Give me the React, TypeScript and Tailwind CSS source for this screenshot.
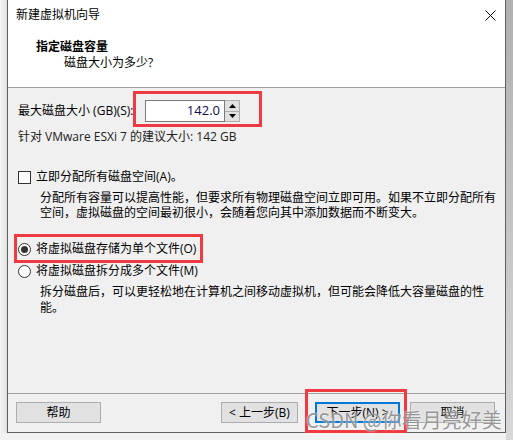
import React from "react";

const FONT = '"Open Sans", "Noto Sans CJK SC", "Microsoft YaHei", sans-serif';

function Checkbox() {
  return <span className="block h-[13px] w-[13px] shrink-0 border border-[#333] bg-white" />;
}

function Radio({ checked }: { checked?: boolean }) {
  return (
    <span className="flex h-[13px] w-[13px] shrink-0 items-center justify-center rounded-full border border-[#333] bg-white">
      {checked && <span className="h-[7px] w-[7px] rounded-full bg-[#333]" />}
    </span>
  );
}

function Btn({ children, w = "w-[85px]", primary }: { children: React.ReactNode; w?: string; primary?: boolean }) {
  return (
    <div
      className={`flex h-[21px] ${w} items-center justify-center bg-[#e1e1e1] text-[12px] text-black ${
        primary ? "border-2 border-[#0078d7]" : "border border-[#adadad]"
      }`}
    >
      {children}
    </div>
  );
}

export default function App() {
  return (
    <div className="relative h-[440px] w-[513px] overflow-hidden bg-[#f2f2f2]" style={{ fontFamily: FONT }}>
      <div className="flex">
        <div className="h-[433px] w-[7px] bg-gradient-to-r from-[#f4f4f4] to-[#e2e2e2]" />
        <div className="flex h-[433px] w-[499px] flex-col border-x border-b border-[#5f5f5f] bg-[#f0f0f0]">
          {/* header */}
          <div className="h-[88px] border-b border-[#a0a0a0] bg-white">
            <div className="flex h-[30px] items-center justify-between pl-[8px] pr-[9px]">
              <span className="text-[12px] leading-none text-black">新建虚拟机向导</span>
              <svg width="11" height="11" viewBox="0 0 11 11" className="mt-[1px]">
                <path d="M0.5 0.5 L10.5 10.5 M10.5 0.5 L0.5 10.5" stroke="#000" strokeWidth="1" />
              </svg>
            </div>
            <div className="mt-[9px] pl-[28px] text-[12px] font-bold leading-[16px] text-black">指定磁盘容量</div>
            <div className="pl-[56px] text-[12px] leading-[16px] text-black">磁盘大小为多少?</div>
          </div>

          {/* body */}
          <div className="flex-1 pl-[10px] pt-[12px] text-[12px] text-black">
            <div className="flex h-[22px] items-center">
              <span className="w-[127px] whitespace-nowrap leading-none">最大磁盘大小 (GB)(S):</span>
              <div className="flex h-[22px]">
                <div className="flex w-[80px] items-center justify-end border border-[#7a7a7a] bg-white pr-[4px] text-[13px] text-[#10104a]">
                  142.0
                </div>
                <div className="flex w-[15px] flex-col border-y border-r border-[#adadad] bg-[#e1e1e1]">
                  <div className="flex flex-1 items-center justify-center border-b border-[#adadad]">
                    <svg width="7" height="4" viewBox="0 0 7 4">
                      <path d="M0 4 L3.5 0 L7 4 Z" fill="#000" />
                    </svg>
                  </div>
                  <div className="flex flex-1 items-center justify-center">
                    <svg width="7" height="4" viewBox="0 0 7 4">
                      <path d="M0 0 L3.5 4 L7 0 Z" fill="#000" />
                    </svg>
                  </div>
                </div>
              </div>
            </div>
            <div className="mt-[7px] leading-[16px] text-[#222]">针对 VMware ESXi 7 的建议大小: 142 GB</div>

            <div className="mt-[24px] flex h-[16px] items-center gap-[5px]">
              <Checkbox />
              <span>立即分配所有磁盘空间(A)。</span>
            </div>
            <div className="mt-[5px] pl-[22px] leading-[15px]">
              分配所有容量可以提高性能，但要求所有物理磁盘空间立即可用。如果不立即分配所有
              <br />
              空间，虚拟磁盘的空间最初很小，会随着您向其中添加数据而不断变大。
            </div>

            <div className="mt-[21px] flex h-[16px] items-center gap-[5px]">
              <Radio checked />
              <span>将虚拟磁盘存储为单个文件(O)</span>
            </div>
            <div className="mt-[6px] flex h-[16px] items-center gap-[5px]">
              <Radio />
              <span>将虚拟磁盘拆分成多个文件(M)</span>
            </div>
            <div className="mt-[5px] pl-[22px] leading-[16px]">
              拆分磁盘后，可以更轻松地在计算机之间移动虚拟机，但可能会降低大容量磁盘的性
              <br />
              能。
            </div>
          </div>

          {/* footer */}
          <div className="flex h-[39px] items-start border-t border-[#a0a0a0] pl-[8px] pt-[8px]">
            <Btn>帮助</Btn>
            <div className="ml-[120px]">
              <Btn w="w-[77px]">&lt; 上一步(B)</Btn>
            </div>
            <div className="ml-[17px]">
              <Btn primary>下一步(N) &gt;</Btn>
            </div>
            <div className="ml-[10px]">
              <Btn>取消</Btn>
            </div>
          </div>
        </div>
        <div className="h-[440px] flex-1 bg-gradient-to-b from-[#b0b0b0] to-[#d8d8d8]" />
      </div>

      {/* annotation boxes */}
      <div className="absolute left-[133px] top-[91px] h-[36px] w-[129px] border-[3px] border-[#ee3a40]" />
      <div className="absolute left-[14px] top-[234px] h-[29px] w-[189px] border-[3px] border-[#ee3a40]" />
      <div className="absolute left-[305px] top-[389px] h-[44px] w-[102px] border-[3px] border-[#ee3a40]" />

      {/* watermark */}
      <div
        className="absolute left-[306px] top-[407px] whitespace-nowrap text-[20px] leading-[26px] text-[#7d7d7d]/80 [text-shadow:0_0_2px_#fff]"
        style={{ fontFamily: '"Noto Sans CJK SC", sans-serif' }}
      >
        CSDN @你看月亮好美
      </div>
    </div>
  );
}
